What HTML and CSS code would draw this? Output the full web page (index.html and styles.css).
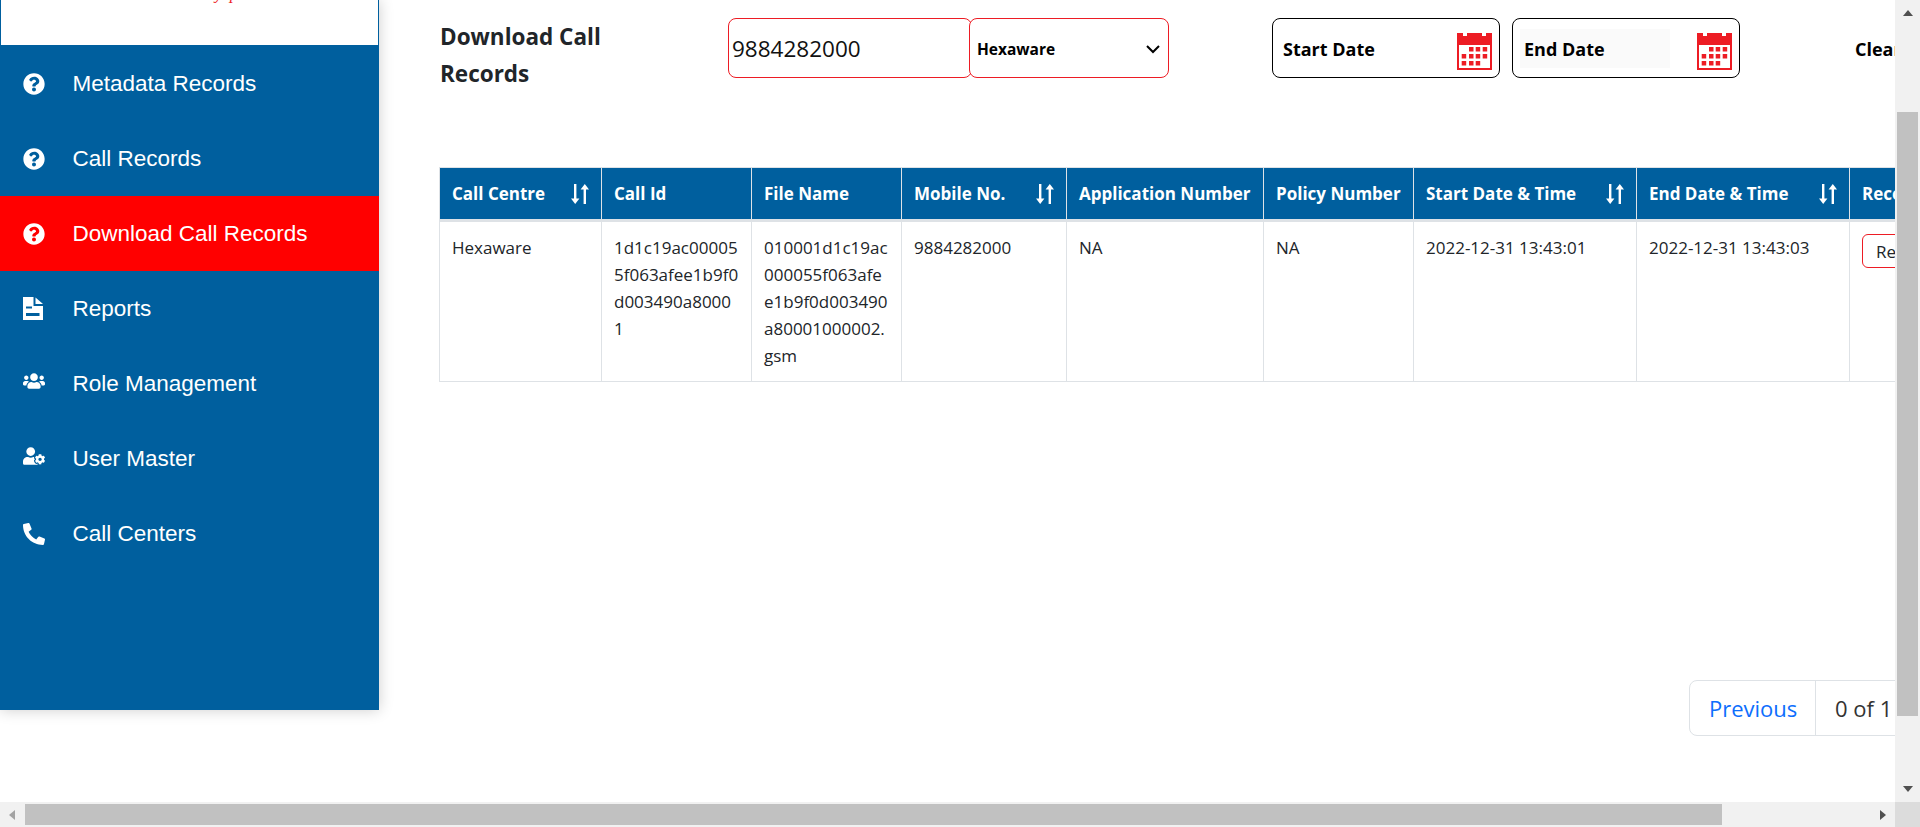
FILE: index.html
```html
<!DOCTYPE html>
<html lang="en">
<head>
  <meta charset="UTF-8">
  <meta name="viewport" content="width=device-width, initial-scale=1">
  <title>Download Call Records</title>
  <link rel="stylesheet" href="styles.css">
</head>
<body>
  <svg class="defs">
    <symbol id="i-question" viewBox="0 0 512 512"><path d="M504 256c0 136.997-111.043 248-248 248S8 392.997 8 256C8 119.083 119.043 8 256 8s248 111.083 248 248zM262.655 90c-54.497 0-89.255 22.957-116.549 63.758-3.536 5.286-2.353 12.415 2.715 16.258l34.699 26.31c5.205 3.947 12.621 3.008 16.665-2.122 17.864-22.658 30.113-35.797 57.303-35.797 20.429 0 45.698 13.148 45.698 32.958 0 14.976-12.363 22.667-32.534 33.976C247.128 238.528 216 254.941 216 296v4c0 6.627 5.373 12 12 12h56c6.627 0 12-5.373 12-12v-1.333c0-28.462 83.186-29.647 83.186-106.667 0-58.002-60.165-102-116.531-102zM256 338c-25.365 0-46 20.635-46 46 0 25.364 20.635 46 46 46s46-20.636 46-46c0-25.365-20.635-46-46-46z"/></symbol>
    <symbol id="i-calendar" viewBox="0 0 35 37"><path fill-rule="evenodd" d="M0 0h6v3h4V0h15v3h4V0h6v37H0zM2 12v23h31V12z"/><path d="M12 14h4.500v4.500H12zM18.700 14h4.500v4.500h-4.500zM25.700 14h4.500v4.500h-4.500zM4.700 21h4.500v4.500H4.700zM12 21h4.500v4.500H12zM18.700 21h4.500v4.500h-4.500zM25.700 21h4.500v4.500h-4.500zM4.700 28h4.500v4.500H4.700zM12 28h4.500v4.500H12zM18.700 28h4.500v4.500h-4.500z"/></symbol>
    <symbol id="i-sort" viewBox="0 0 18 20"><path d="M3 0h2.400v14.500H8.400L4.200 20 0 14.500h3zM12.600 20h2.400V5.500h3L13.800 0 9.600 5.500h3z"/></symbol>
  </svg>

  <div class="shell">
    <div class="view">
      <aside class="sidebar">
        <div class="logo"><span class="logo-text">y p</span></div>
        <nav class="menu">
          <a class="menu-item"><svg class="icon"><use href="#i-question"/></svg>Metadata Records</a>
          <a class="menu-item"><svg class="icon"><use href="#i-question"/></svg>Call Records</a>
          <a class="menu-item active"><svg class="icon"><use href="#i-question"/></svg>Download Call Records</a>
          <a class="menu-item"><svg class="icon icon-file" viewBox="0 0 20 23"><path fill-rule="evenodd" d="M0 0h10.500v9H20v14H0zM3 9.500v2h6v-2zM3 16v3h13.500v-3z"/><path d="M12.500.5L20 7h-7.500z"/></svg>Reports</a>
          <a class="menu-item"><svg class="icon icon-users" viewBox="0 0 640 512"><path d="M96 224c35.300 0 64-28.700 64-64s-28.700-64-64-64-64 28.700-64 64 28.700 64 64 64zm448 0c35.300 0 64-28.700 64-64s-28.700-64-64-64-64 28.700-64 64 28.700 64 64 64zm32 32h-64c-17.600 0-33.500 7.100-45.100 18.600 40.300 22.100 68.900 62 75.100 109.400h66c17.700 0 32-14.300 32-32v-32c0-35.300-28.700-64-64-64zm-256 0c61.900 0 112-50.100 112-112S381.900 32 320 32 208 82.100 208 144s50.100 112 112 112zm76.800 32h-8.300c-20.800 10-43.900 16-68.500 16s-47.600-6-68.500-16h-8.300C179.600 288 128 339.600 128 403.200V432c0 26.500 21.500 48 48 48h288c26.500 0 48-21.500 48-48v-28.800c0-63.600-51.600-115.200-115.200-115.200zm-223.700-13.400C161.500 263.100 145.600 256 128 256H64c-35.300 0-64 28.700-64 64v32c0 17.700 14.300 32 32 32h65.900c6.300-47.400 34.900-87.300 75.200-109.400z"/></svg>Role Management</a>
          <a class="menu-item"><svg class="icon icon-usercog" viewBox="0 0 640 512"><path d="M610.500 373.300c2.600-14.100 2.600-28.500 0-42.600l25.800-14.900c3-1.700 4.300-5.200 3.300-8.500-6.700-21.600-18.200-41.200-33.200-57.400-2.300-2.500-6-3.100-9-1.400l-25.800 14.900c-10.900-9.300-23.400-16.500-36.900-21.300v-29.800c0-3.400-2.400-6.400-5.700-7.100-22.300-5-45-4.800-66.200 0-3.300.7-5.700 3.700-5.700 7.100v29.800c-13.500 4.800-26 12-36.900 21.300l-25.800-14.900c-2.900-1.700-6.700-1.100-9 1.400-15 16.200-26.500 35.800-33.200 57.400-1 3.300.4 6.800 3.300 8.500l25.800 14.900c-2.600 14.100-2.600 28.500 0 42.600l-25.800 14.900c-3 1.700-4.300 5.200-3.300 8.500 6.700 21.600 18.200 41.100 33.200 57.400 2.300 2.500 6 3.100 9 1.400l25.800-14.900c10.900 9.300 23.400 16.500 36.900 21.300v29.800c0 3.400 2.400 6.400 5.700 7.100 22.300 5 45 4.800 66.200 0 3.300-.7 5.700-3.700 5.700-7.100v-29.800c13.500-4.800 26-12 36.900-21.300l25.800 14.900c2.900 1.700 6.700 1.100 9-1.400 15-16.200 26.500-35.800 33.200-57.400 1-3.300-.4-6.800-3.300-8.500l-25.800-14.900zM496 400.500c-26.800 0-48.500-21.800-48.500-48.500s21.800-48.500 48.500-48.500 48.500 21.800 48.500 48.500-21.700 48.500-48.500 48.500zM224 256c70.700 0 128-57.300 128-128S294.700 0 224 0 96 57.300 96 128s57.300 128 128 128zm201.200 226.500c-2.300-1.200-4.600-2.600-6.800-3.900l-7.900 4.600c-6 3.400-12.800 5.300-19.600 5.300-10.900 0-21.400-4.600-28.900-12.600-18.300-19.800-32.300-43.900-40.200-69.600-5.500-17.700 1.900-36.400 17.900-45.700l7.900-4.600c-.1-2.600-.1-5.200 0-7.800l-7.900-4.600c-16-9.200-23.400-28-17.900-45.700.9-2.900 2.200-5.800 3.200-8.700-3.800-.3-7.500-1.200-11.400-1.200h-16.700c-22.200 10.200-46.900 16-72.900 16s-50.600-5.800-72.900-16h-16.700C60.200 288 0 348.200 0 422.400V464c0 26.500 21.500 48 48 48h352c10.100 0 19.500-3.200 27.200-8.500-1.200-3.800-2-7.700-2-11.800v-9.200z"/></svg>User Master</a>
          <a class="menu-item"><svg class="icon" viewBox="0 0 512 512"><path d="M497.390 361.800l-112-48a24 24 0 0 0-28 6.900l-49.600 60.600A370.660 370.660 0 0 1 130.600 204.110l60.600-49.600a23.940 23.940 0 0 0 6.900-28l-48-112A24.160 24.160 0 0 0 122.600.610l-104 24A24 24 0 0 0 0 48c0 256.500 207.900 464 464 464a24 24 0 0 0 23.400-18.600l24-104a24.290 24.290 0 0 0-14.010-27.600z"/></svg>Call Centers</a>
        </nav>
      </aside>

      <main class="content">
        <section class="filters">
          <h2 class="page-title">Download Call Records</h2>
          <input class="field field-mobile" type="text" value="9884282000">
          <div class="field field-select"><span>Hexaware</span><svg class="chevron" viewBox="0 0 16 16"><path d="M2 5l6 6 6-6" fill="none" stroke="currentColor" stroke-width="2"/></svg></div>
          <div class="date-box date-start"><span class="date-label">Start Date</span><svg class="calendar"><use href="#i-calendar"/></svg></div>
          <div class="date-box date-end"><span class="date-label date-filled">End Date</span><svg class="calendar"><use href="#i-calendar"/></svg></div>
          <span class="clear">Clear</span>
        </section>

        <table class="records">
          <colgroup>
            <col class="c1"><col class="c2"><col class="c3"><col class="c4"><col class="c5"><col class="c6"><col class="c7"><col class="c8"><col class="c9">
          </colgroup>
          <thead>
            <tr>
              <th><div class="th-sort">Call Centre<svg class="sort"><use href="#i-sort"/></svg></div></th>
              <th>Call Id</th>
              <th>File Name</th>
              <th><div class="th-sort">Mobile No.<svg class="sort"><use href="#i-sort"/></svg></div></th>
              <th>Application Number</th>
              <th>Policy Number</th>
              <th><div class="th-sort">Start Date &amp; Time<svg class="sort"><use href="#i-sort"/></svg></div></th>
              <th><div class="th-sort">End Date &amp; Time<svg class="sort"><use href="#i-sort"/></svg></div></th>
              <th>Recording</th>
            </tr>
          </thead>
          <tbody>
            <tr>
              <td>Hexaware</td>
              <td>1d1c19ac00005<br>5f063afee1b9f0<br>d003490a8000<br>1</td>
              <td>010001d1c19ac<br>000055f063afe<br>e1b9f0d003490<br>a80001000002.<br>gsm</td>
              <td>9884282000</td>
              <td>NA</td>
              <td>NA</td>
              <td>2022-12-31 13:43:01</td>
              <td>2022-12-31 13:43:03</td>
              <td><button class="btn-outline">Request</button></td>
            </tr>
          </tbody>
        </table>

        <div class="pager">
          <a class="page-link page-prev">Previous</a>
          <span class="page-link page-count">0 of 1</span>
        </div>
      </main>
    </div>

    <div class="vscroll">
      <span class="arrow arrow-up"></span>
      <span class="vthumb"></span>
      <span class="arrow arrow-down"></span>
    </div>
    <div class="hscroll">
      <span class="arrow arrow-left"></span>
      <span class="hthumb"></span>
      <span class="arrow arrow-right"></span>
    </div>
    <div class="corner"></div>
  </div>
</body>
</html>
```

FILE: styles.css
```css
* { box-sizing: border-box; }
html, body { height: 100%; }
body {
  margin: 0;
  overflow: hidden;
  background: #fff;
  color: #212529;
  font-family: "Open Sans", sans-serif;
}
.defs { display: none; }

.shell {
  display: grid;
  grid-template-columns: 1fr 25px;
  grid-template-rows: 1fr 25px;
  height: 100%;
}
.view { display: flex; overflow: hidden; min-width: 0; }

/* sidebar */
.sidebar {
  flex: 0 0 379px;
  height: 710px;
  background: #005f9e;
  box-shadow: 0 0 14px rgba(0,0,0,0.2);
  font-family: "Liberation Sans", Arial, sans-serif;
  position: relative;
}
.logo {
  height: 45px;
  background: #fff;
  border: solid #005f9e;
  border-width: 0 1px;
  display: flex;
  align-items: flex-end;
  padding-left: 214px;
  overflow: hidden;
}
.logo-text {
  color: #ed1c24;
  font-family: "Liberation Serif", serif;
  font-style: italic;
  font-size: 17px;
  line-height: 20px;
  word-spacing: 3px;
  margin-bottom: 41px;
}
.menu { padding-top: 1px; }
.menu-item {
  display: flex;
  align-items: center;
  height: 75px;
  padding-left: 23px;
  color: #fff;
  font-size: 22.500px;
}
.menu-item.active { background: #f00; }
.icon {
  flex: 0 0 22px;
  width: 22px;
  height: 22px;
  margin-right: 27.500px;
  fill: #fff;
}
.icon-file { flex-basis: 20px; width: 20px; height: 23px; margin-right: 29.500px; }
.icon-users { height: 18px; margin-top: -6px; }
.icon-usercog { height: 18px; margin-top: -6px; }

/* filter row */
.content {
  flex: 1;
  min-width: 0;
  padding: 18px 0 0 61px;
  overflow: hidden;
}
.filters {
  display: flex;
  align-items: center;
  height: 60px;
  white-space: nowrap;
}
.page-title {
  flex: 0 0 288px;
  margin: 14px 0 0;
  font-size: 22.500px;
  font-weight: 700;
  line-height: 37px;
  white-space: normal;
  padding-right: 100px;
  color: #212529;
}
.field {
  height: 60px;
  border: 1px solid #ed1c24;
  border-radius: 8px;
  background: #fff;
  font-family: inherit;
  color: #111;
}
.field-mobile {
  flex: 0 0 244px;
  min-width: 0;
  padding: 0 3px;
  font-size: 22.500px;
  outline: none;
}
.field-select {
  flex: 0 0 200px;
  margin-left: -3px;
  display: flex;
  align-items: center;
  justify-content: space-between;
  padding: 2px 7px 0 7px;
  font-size: 15.500px;
  font-weight: 700;
  color: #000;
}
.chevron { width: 16px; height: 16px; }
.date-box {
  flex: 0 0 228px;
  height: 60px;
  display: flex;
  align-items: center;
  justify-content: space-between;
  border: 1px solid #000;
  border-radius: 8px;
  font-size: 18px;
  font-weight: 700;
  color: #000;
  padding: 0 7px 0 10px;
}
.date-start { margin-left: 103px; }
.date-end { margin-left: 12px; padding-left: 7px; }
.date-label { padding-top: 2px; }
.date-filled {
  width: 150px;
  height: 39px;
  line-height: 37px;
  background: #fafafa;
  padding-left: 4px;
}
.calendar { width: 35px; height: 37px; fill: #ed1c24; margin-top: 7px; }
.clear {
  margin-left: 115px;
  padding-top: 2px;
  font-size: 18px;
  font-weight: 700;
  color: #000;
}

/* table */
.records {
  margin: 89px 0 0 -1px;
  border-collapse: collapse;
  table-layout: fixed;
  width: 1560px;
  font-size: 17px;
  line-height: 27px;
}
.c1 { width: 162px; }
.c2 { width: 150px; }
.c3 { width: 150px; }
.c4 { width: 165px; }
.c5 { width: 197px; }
.c6 { width: 150px; }
.c7 { width: 223px; }
.c8 { width: 213px; }
.c9 { width: 150px; }
.records th, .records td {
  border: 1px solid #dee2e6;
  padding: 12px;
  text-align: left;
  vertical-align: top;
}
.records th {
  background: #005f9e;
  color: #fff;
  font-size: 17px;
  font-weight: 700;
  white-space: nowrap;
  border-bottom: 3px solid #dee2e6;
  height: 53px;
  padding-top: 12px;
  padding-bottom: 9px;
}
.records td { color: #212529; }
.th-sort {
  display: flex;
  align-items: center;
  justify-content: space-between;
}
.sort { width: 18px; height: 20px; fill: #fff; }
.btn-outline {
  height: 34px;
  padding: 0 13px;
  background: #fff;
  border: 1px solid #ed1c24;
  border-radius: 6px;
  font: inherit;
  line-height: 1;
  color: #212529;
}

/* pager */
.pager {
  display: flex;
  margin-top: 298px;
  margin-left: 1249px;
  width: 320px;
  height: 56px;
}
.page-link {
  display: flex;
  align-items: center;
  border: 1px solid #dee2e6;
  font-size: 22px;
}
.page-prev {
  width: 127px;
  padding-left: 19px;
  color: #0d6efd;
  border-radius: 8px 0 0 8px;
}
.page-count {
  width: 160px;
  margin-left: -1px;
  padding-left: 19px;
  color: #333;
}

/* scrollbars */
.vscroll {
  background: #f1f1f1;
  display: flex;
  flex-direction: column;
  align-items: center;
  padding-top: 10px;
}
.vthumb {
  width: 21px;
  height: 604px;
  margin-top: 96px;
  background: #c1c1c1;
}
.hscroll {
  background: #f1f1f1;
  display: flex;
  align-items: center;
  padding-left: 9px;
}
.hthumb {
  width: 1697px;
  height: 21px;
  margin-left: 10px;
  background: #c1c1c1;
}
.corner { background: #dcdcdc; }
.arrow { width: 0; height: 0; border: solid transparent; }
.arrow-up { border-width: 0 5.500px 6px; border-bottom-color: #505050; }
.arrow-down { border-width: 6px 5.500px 0; border-top-color: #505050; margin-top: 70px; }
.arrow-left { border-width: 5.500px 6px 5.500px 0; border-right-color: #a3a3a3; }
.arrow-right { border-width: 5.500px 0 5.500px 6px; border-left-color: #505050; margin-left: 158px; }
```
